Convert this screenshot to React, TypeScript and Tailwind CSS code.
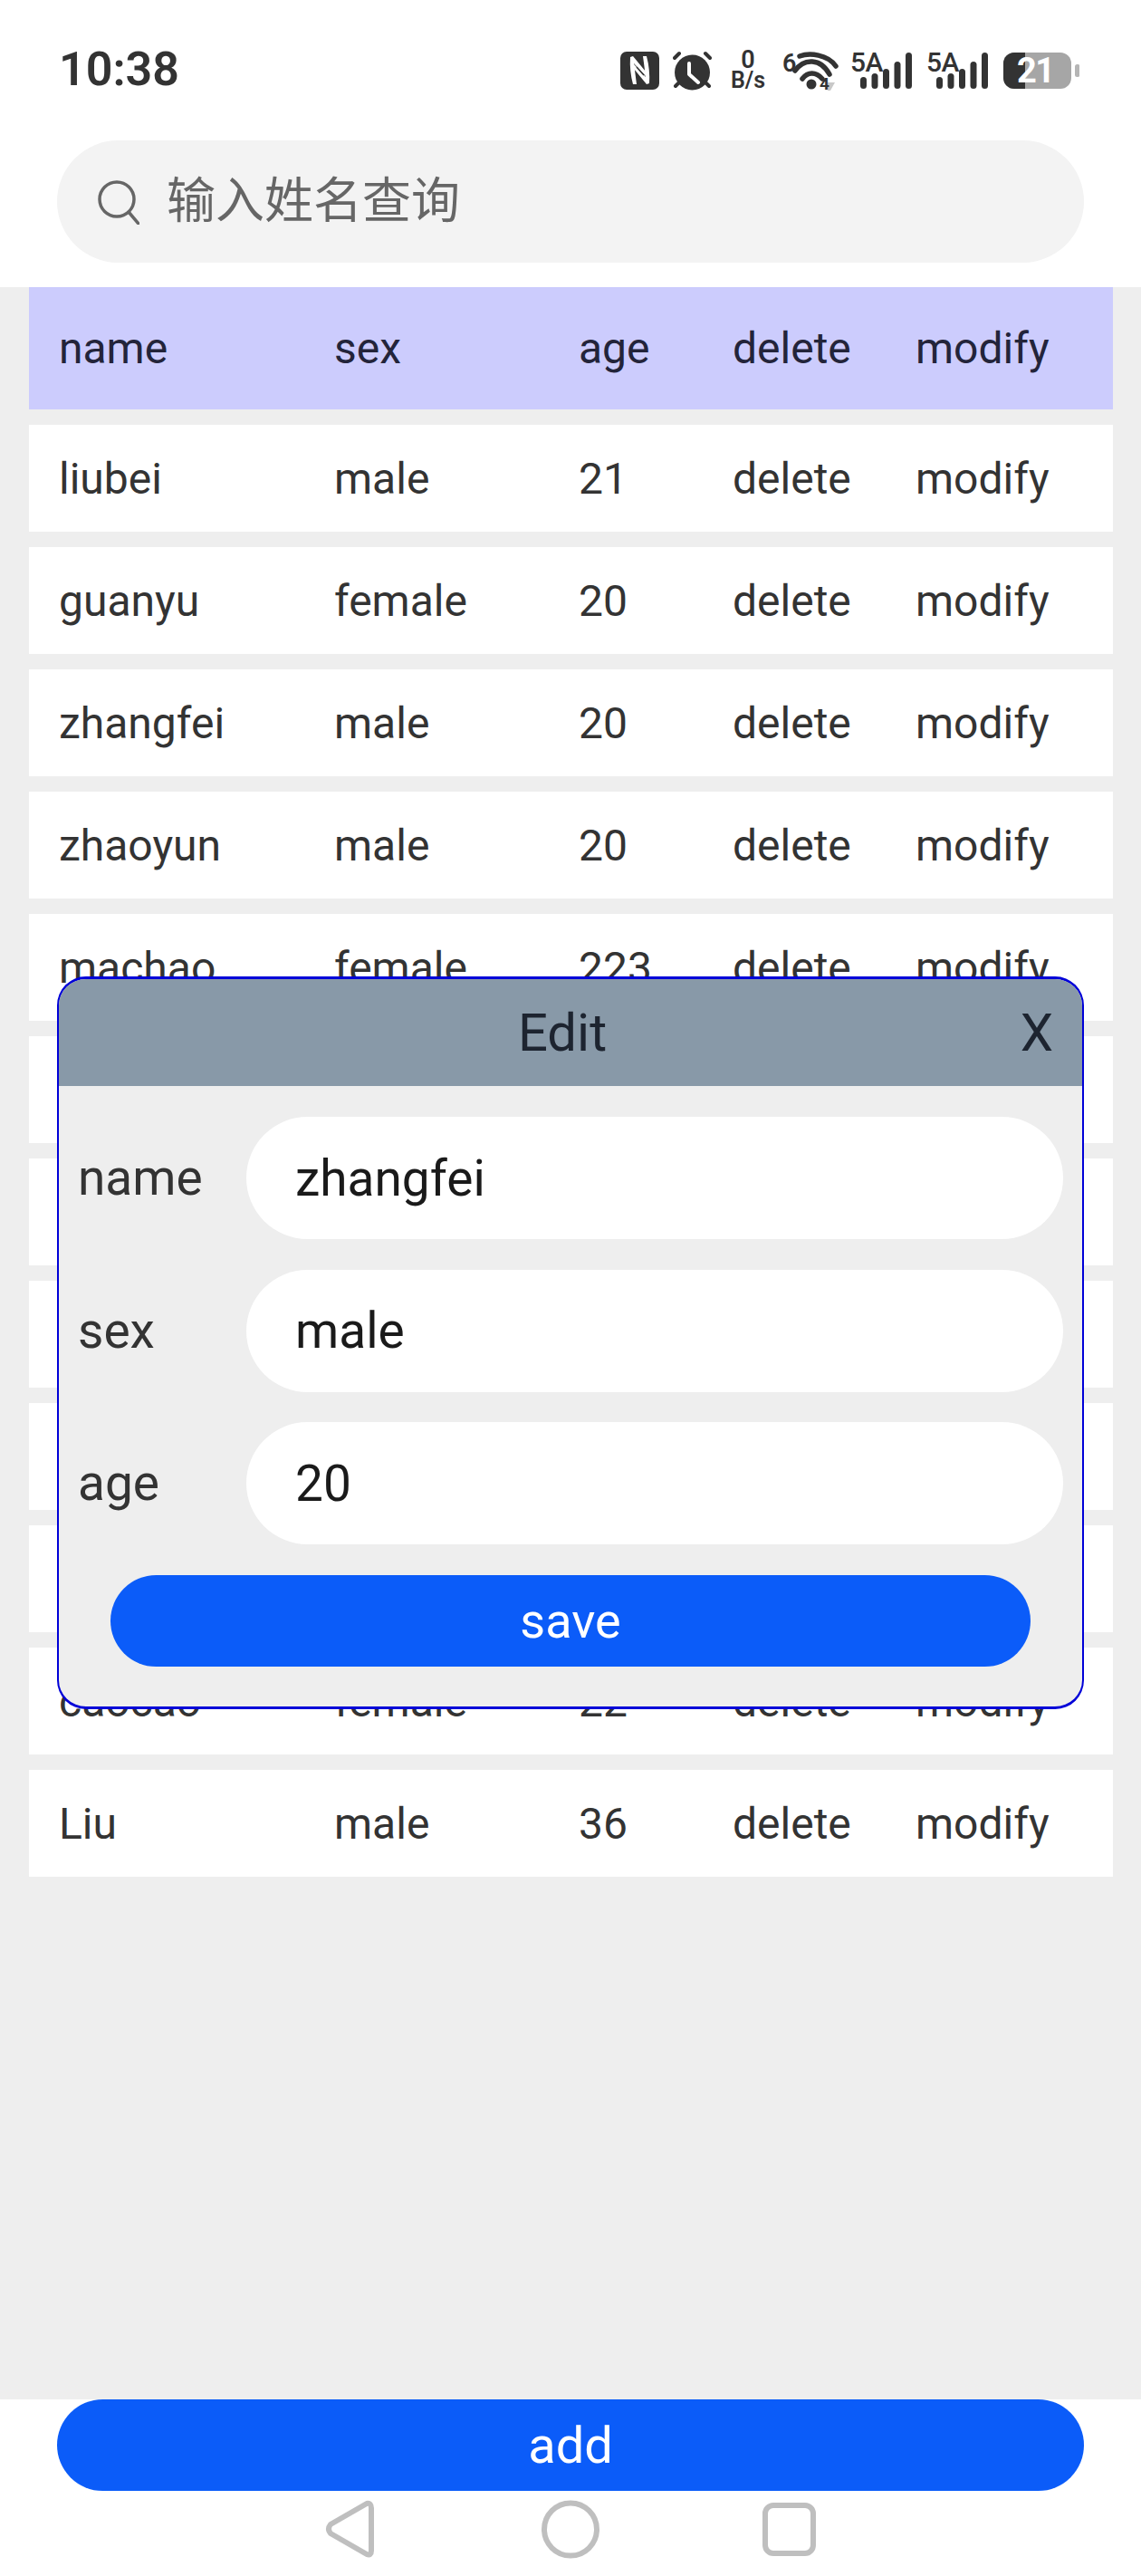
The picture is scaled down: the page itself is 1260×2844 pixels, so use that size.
import React from 'react';

const rows = [
  ['liubei', 'male', '21'],
  ['guanyu', 'female', '20'],
  ['zhangfei', 'male', '20'],
  ['zhaoyun', 'male', '20'],
  ['machao', 'female', '223'],
  ['', '', ''],
  ['', '', ''],
  ['', '', ''],
  ['', '', ''],
  ['', '', ''],
  ['caocao', 'female', '22'],
  ['Liu', 'male', '36'],
];

const fields = [
  ['name', 'zhangfei'],
  ['sex', 'male'],
  ['age', '20'],
];

const Signal: React.FC = () => (
  <div className="relative w-[69px] h-[44px]">
    <span className="absolute left-0 top-[-3px] text-[30px] leading-[32px] font-medium tracking-[-0.5px] text-[#333]">5A</span>
    <svg width="69" height="44" viewBox="0 0 69 44" fill="#333">
      <rect x="11" y="29" width="7" height="13" rx="3.5" />
      <rect x="23.5" y="25" width="7" height="17" rx="3.5" />
      <rect x="36" y="20" width="7" height="22" rx="3.5" />
      <rect x="48.5" y="12" width="7" height="30" rx="3.5" />
      <rect x="61" y="2" width="7" height="40" rx="3.5" />
    </svg>
  </div>
);

const StatusIcons: React.FC = () => (
  <div className="flex items-center">
    {/* nfc */}
    <svg width="43" height="44" viewBox="0 0 43 44">
      <rect x="0" y="1" width="43" height="42" rx="7" fill="#333" />
      <path d="M11 7 L14 6 L28 23 V28 L15 14 L18 37 L14 37 Q10 22 11 7 Z" fill="#fff" />
      <path d="M32 36 L29 37 L15 20 V15 L28 29 L25 6 L29 6 Q33 21 32 36 Z" fill="#fff" />
      <path d="M18 18 L26 27" stroke="#333" strokeWidth="1.5" />
    </svg>
    {/* alarm */}
    <svg width="43" height="44" viewBox="0 0 43 44" className="ml-[15px]">
      <circle cx="21.5" cy="24" r="19.5" fill="#333" />
      <path d="M2 8 L7 3 M41 8 L36 3 M6 36 L3 39 M37 36 L40 39" stroke="#333" strokeWidth="4" strokeLinecap="round" />
      <path d="M18 14 V26 L28 35" fill="none" stroke="#fff" strokeWidth="4" strokeLinecap="round" strokeLinejoin="round" />
    </svg>
    {/* speed */}
    <div className="flex flex-col items-center w-[40px] ml-[20px] font-semibold text-[#333]">
      <span className="text-[27px] leading-[21px]">0</span>
      <span className="text-[25px] leading-[23px]">B/s</span>
    </div>
    {/* wifi */}
    <div className="relative w-[62px] h-[44px] ml-[18px]">
      <span className="absolute left-0 top-0 text-[27px] leading-[28px] font-semibold text-[#333]">6</span>
      <span className="absolute left-[41px] top-[27px] text-[19px] leading-[20px] font-bold text-[#333]">4</span>
      <svg width="62" height="44" viewBox="0 0 62 44">
        <g fill="none" stroke="#333" strokeWidth="5.5" strokeLinecap="round">
          <path d="M19 6 C30 2 50 4 59 17" />
          <path d="M14 22 C24 8 42 8 52 26" />
          <path d="M22 31 C28 23 37 23 44 31" />
        </g>
        <circle cx="32" cy="37" r="5.5" fill="#333" />
        <path d="M50 35 H58 L53 44 H50 Z" fill="#c8c8c8" />
      </svg>
    </div>
    <div className="ml-[13px]">
      <Signal />
    </div>
    <div className="ml-[15px]">
      <Signal />
    </div>
    {/* battery */}
    <div className="relative w-[84px] h-[44px] ml-[16px]">
      <svg width="84" height="44" viewBox="0 0 84 44">
        <rect x="0" y="2" width="75" height="40" rx="12" fill="#a6a6a6" />
        <path d="M12 2 H24 V42 H12 A12 12 0 0 1 0 30 V14 A12 12 0 0 1 12 2 Z" fill="#333" />
        <rect x="79" y="15" width="5.5" height="14" rx="2.5" fill="#b5b5b5" />
      </svg>
      <span className="absolute left-[15px] top-[1px] text-[38px] leading-[42px] font-bold tracking-[-1.5px] text-white">21</span>
    </div>
  </div>
);

const App: React.FC = () => {
  return (
    <div className="relative flex flex-col h-[2844px] bg-white overflow-hidden font-[Roboto,'Noto_Sans_CJK_SC',sans-serif]">
      {/* Status bar */}
      <div className="flex items-center justify-between h-[155px] pl-[65px] pr-[68px]">
        <span className="text-[52px] font-semibold text-[#333] leading-none mb-[1px]">10:38</span>
        <StatusIcons />
      </div>

      {/* Search */}
      <div className="px-[63px] pb-[27px]">
        <div className="flex items-center h-[135px] rounded-full bg-[#f3f3f3] pl-[45px]">
          <svg width="46" height="50" viewBox="0 0 46 50" fill="none" stroke="#666" strokeWidth="3.5">
            <circle cx="21" cy="22" r="19" />
            <path d="M34 36 L45 49" strokeLinecap="round" />
          </svg>
          <span className="ml-[30px] text-[54px] text-[#666] leading-none">输入姓名查询</span>
        </div>
      </div>

      {/* Table */}
      <div className="flex-1 flex flex-col gap-[17px] bg-[#eeeeee] pl-[32px] pr-[31px]">
        <div className="grid grid-cols-[304px_270px_170px_202px_1fr] items-center h-[135px] bg-[#ccccfd] pl-[33px] pt-[1px] text-[48px] text-[#23243a]">
          <span>name</span>
          <span>sex</span>
          <span>age</span>
          <span>delete</span>
          <span>modify</span>
        </div>
        {rows.map((row, i) => (
          <div
            key={i}
            className="grid grid-cols-[304px_270px_170px_202px_1fr] items-center h-[118px] bg-white pl-[33px] pt-[2px] text-[48px] text-[#333]"
          >
            <span>{row[0]}</span>
            <span>{row[1]}</span>
            <span>{row[2]}</span>
            <span>{row[0] && 'delete'}</span>
            <span>{row[0] && 'modify'}</span>
          </div>
        ))}
      </div>

      {/* Footer */}
      <div className="h-[195px] bg-white px-[63px]">
        <button className="w-full h-[101px] rounded-full bg-[#0b5cf9] text-white text-[56px]">add</button>
        <div className="flex justify-center items-center mt-[10px]">
          <svg width="54" height="65" viewBox="0 0 54 65" fill="none" stroke="#bfbfbf" strokeWidth="6" strokeLinejoin="round">
            <path d="M46 4 Q51 3 51 9 V56 Q51 62 46 60 L6 37 Q2 32 6 27 Z" />
          </svg>
          <svg width="64" height="65" viewBox="0 0 64 65" fill="none" stroke="#bfbfbf" strokeWidth="6" className="ml-[185px]">
            <circle cx="32" cy="32.5" r="29" />
          </svg>
          <svg width="59" height="59" viewBox="0 0 59 59" fill="none" stroke="#bfbfbf" strokeWidth="6" className="ml-[180px]">
            <rect x="3" y="3" width="53" height="53" rx="9" />
          </svg>
        </div>
      </div>

      {/* Edit dialog */}
      <div className="absolute left-[63px] top-[1078px] w-[1134px] h-[809px] rounded-[32px] border-x-2 border-y-[3px] border-[#0000d8] bg-[#eeeeee] overflow-hidden">
        <div className="relative flex items-center justify-center h-[118px] pr-[18px] bg-[#8899a8] text-[58px] text-[#1d2430]">
          <span>Edit</span>
          <span className="absolute right-[32px]">X</span>
        </div>
        <div className="flex flex-col gap-[33.5px] pt-[34px] pl-[21px] pr-[21px]">
          {fields.map(([label, value]) => (
            <div key={label} className="flex items-center">
              <span className="w-[186px] text-[55px] text-[#333]">{label}</span>
              <input
                readOnly
                value={value}
                className="flex-1 h-[135px] rounded-full bg-white pl-[54px] text-[55px] text-[#1a1a1a] outline-none"
              />
            </div>
          ))}
          <div className="px-[36px]">
            <button className="w-full h-[101px] rounded-full bg-[#0b5cf9] text-white text-[54px]">save</button>
          </div>
        </div>
      </div>
    </div>
  );
};

export default App;
